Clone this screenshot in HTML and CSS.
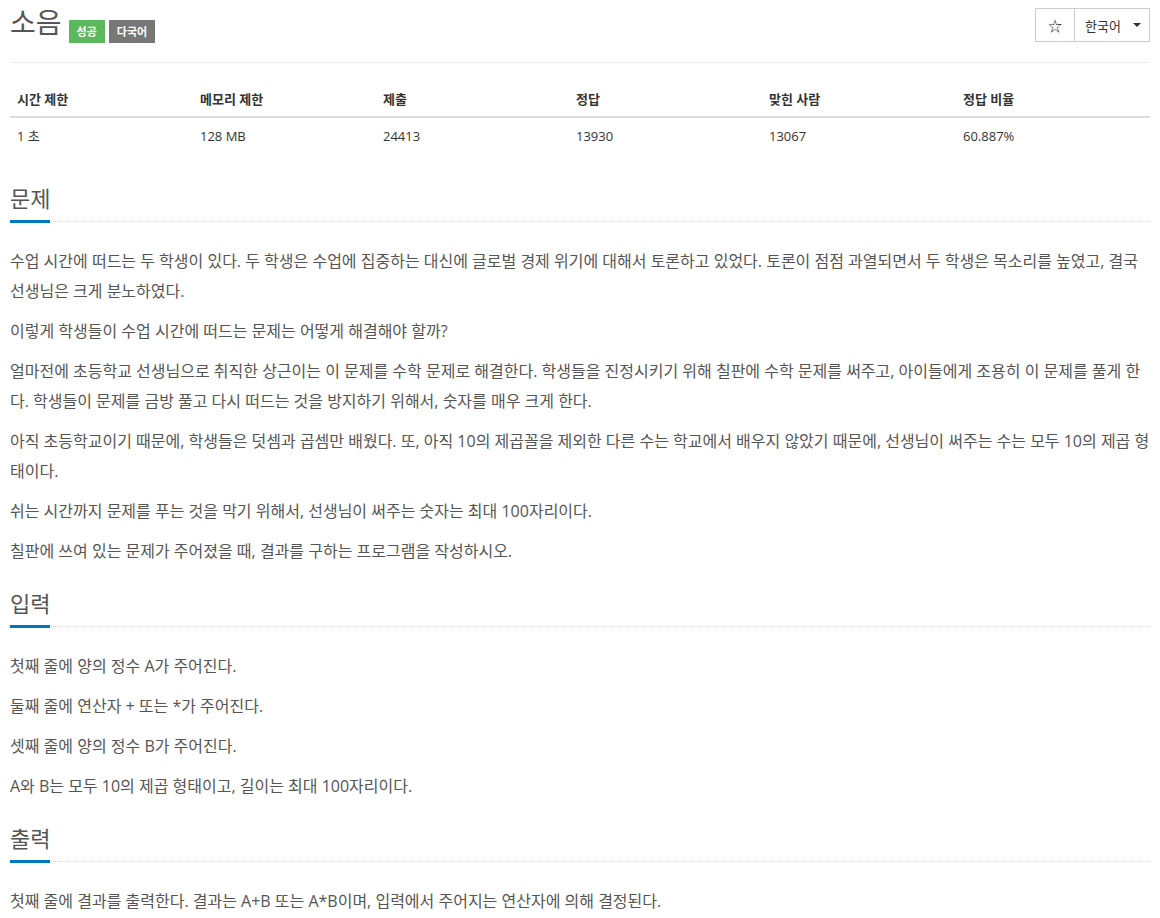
FILE: index.html
```html
<!DOCTYPE html>
<html lang="ko">
<head>
  <meta charset="UTF-8" />
  <title>소음</title>
  <link rel="stylesheet" href="styles.css">
</head>
<body>
  <div class="page">
    <!-- Title & actions -->
    <div class="page-header">
      <h1 class="title">
        <span class="title-text">소음</span>
        <span class="label label-success">성공</span>
        <span class="label label-default">다국어</span>
      </h1>
      <div class="btn-group">
        <button class="btn btn-star">&#9734;</button>
        <button class="btn btn-lang">한국어 <span class="caret"></span></button>
      </div>
    </div>

    <!-- Limits & stats -->
    <table class="info">
      <thead>
        <tr>
          <th class="col-a">시간 제한</th>
          <th class="col-a">메모리 제한</th>
          <th class="col-b">제출</th>
          <th class="col-b">정답</th>
          <th class="col-c">맞힌 사람</th>
          <th class="col-c">정답 비율</th>
        </tr>
      </thead>
      <tbody>
        <tr>
          <td>1 초 </td>
          <td>128 MB</td>
          <td>24413</td>
          <td>13930</td>
          <td>13067</td>
          <td>60.887%</td>
        </tr>
      </tbody>
    </table>

    <!-- Description -->
    <section class="problem-section">
      <div class="headline"><h2><span>문제</span></h2></div>
      <div class="problem-text">
        <p>수업 시간에 떠드는 두 학생이 있다. 두 학생은 수업에 집중하는 대신에 글로벌 경제 위기에 대해서 토론하고 있었다. 토론이 점점 과열되면서 두 학생은 목소리를 높였고, 결국 선생님은 크게 분노하였다.</p>
        <p>이렇게 학생들이 수업 시간에 떠드는 문제는 어떻게 해결해야 할까?</p>
        <p>얼마전에 초등학교 선생님으로 취직한 상근이는 이 문제를 수학 문제로 해결한다. 학생들을 진정시키기 위해 칠판에 수학 문제를 써주고, 아이들에게 조용히 이 문제를 풀게 한다. 학생들이 문제를 금방 풀고 다시 떠드는 것을 방지하기 위해서, 숫자를 매우 크게 한다.</p>
        <p>아직 초등학교이기 때문에, 학생들은 덧셈과 곱셈만 배웠다. 또, 아직 10의 제곱꼴을 제외한 다른 수는 학교에서 배우지 않았기 때문에, 선생님이 써주는 수는 모두 10의 제곱 형태이다.</p>
        <p>쉬는 시간까지 문제를 푸는 것을 막기 위해서, 선생님이 써주는 숫자는 최대 100자리이다.</p>
        <p>칠판에 쓰여 있는 문제가 주어졌을 때, 결과를 구하는 프로그램을 작성하시오.</p>
      </div>
    </section>

    <!-- Input -->
    <section class="problem-section">
      <div class="headline"><h2><span>입력</span></h2></div>
      <div class="problem-text">
        <p>첫째 줄에 양의 정수 A가 주어진다.</p>
        <p>둘째 줄에 연산자 + 또는 *가 주어진다.</p>
        <p>셋째 줄에 양의 정수 B가 주어진다.</p>
        <p>A와 B는 모두 10의 제곱 형태이고, 길이는 최대 100자리이다.</p>
      </div>
    </section>

    <!-- Output -->
    <section class="problem-section">
      <div class="headline"><h2><span>출력</span></h2></div>
      <div class="problem-text">
        <p>첫째 줄에 결과를 출력한다. 결과는 A+B 또는 A*B이며, 입력에서 주어지는 연산자에 의해 결정된다.</p>
      </div>
    </section>
  </div>
</body>
</html>
```

FILE: styles.css
```css
/* Base */
* {
  box-sizing: border-box;
}
body {
  margin: 0;
  font-family: 'Open Sans', 'Noto Sans CJK KR', sans-serif;
  font-size: 13px;
  color: #333;
  background: #fff;
}
.page {
  padding: 0 10px;
}

/* Header */
.page-header {
  display: flex;
  justify-content: space-between;
  align-items: flex-start;
  border-bottom: 1px solid #eee;
  height: 63px;
}
.title {
  margin: 0;
  padding-top: 4px;
  display: flex;
  align-items: flex-start;
  font-weight: 400;
  color: #555;
}
.title-text {
  font-size: 28px;
  line-height: 36px;
  margin-right: 3px;
}
.label {
  display: inline-block;
  height: 23px;
  line-height: 23px;
  padding: 0 8px;
  margin-left: 4px;
  margin-top: 16px;
  font-size: 11px;
  font-weight: 700;
  color: #fff;
}
.label-success {
  background: #5cb85c;
}
.label-default {
  background: #777;
}
.btn-group {
  display: flex;
  margin-top: 8px;
}
.btn {
  height: 34px;
  background: #fff;
  border: 1px solid #ccc;
  font-family: inherit;
  font-size: 13px;
  color: #333;
  padding: 0;
  cursor: pointer;
}
.btn-star {
  width: 39px;
  font-size: 14px;
  color: #222;
  border-right: none;
}
.btn-lang {
  width: 76px;
  padding-left: 2px;
  display: flex;
  align-items: center;
  justify-content: center;
  gap: 12px;
}
.caret {
  width: 0;
  height: 0;
  border-left: 4px solid transparent;
  border-right: 4px solid transparent;
  border-top: 4px solid #333;
}

/* Info table */
.info {
  width: 100%;
  border-collapse: collapse;
  margin-top: 18px;
}
.info th,
.info td {
  text-align: left;
  padding: 8px 7px;
  line-height: 20px;
}
.info th {
  font-weight: 700;
  padding-bottom: 7px;
  border-bottom: 2px solid #ddd;
}
.col-a {
  width: 183px;
}
.col-b {
  width: 193px;
}
.col-c {
  width: 194px;
}

/* Problem sections */
.problem-section {
  margin-top: 29px;
}
.problem-section + .problem-section {
  margin-top: 22px;
}
.headline {
  border-bottom: 1px dotted #ddd;
  margin-bottom: 24px;
}
.headline h2 {
  margin: 0;
  font-size: 22px;
  line-height: 30px;
  font-weight: 400;
  color: #555;
}
.headline h2 span {
  display: inline-block;
  padding-bottom: 7px;
  margin-bottom: -2px;
  border-bottom: 3px solid #0076c0;
}
.problem-text {
  font-size: 16px;
  line-height: 30px;
  color: #555;
  word-break: break-all;
}
.problem-text p {
  margin: 0 0 10px;
}
```
